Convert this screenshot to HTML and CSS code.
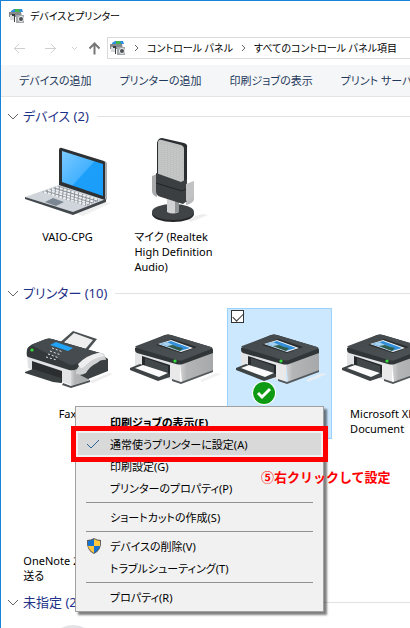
FILE: index.html
```html
<!DOCTYPE html>
<html lang="ja">

<head>
    <meta charset="UTF-8">
    <meta name="viewport" content="width=device-width, initial-scale=1.0">
    <title>デバイスとプリンター</title>
    <link rel="stylesheet" href="styles.css">
</head>

<body>
    <!-- shared drawings -->
    <svg class="defs" width="0" height="0" aria-hidden="true">
        <defs>
            <linearGradient id="screen" x1="0" y1="0" x2="1" y2="1">
                <stop offset="0" stop-color="#7ccaff" />
                <stop offset="0.5" stop-color="#45b2ff" />
                <stop offset="0.52" stop-color="#1c9ffb" />
                <stop offset="1" stop-color="#1a9df8" />
            </linearGradient>
            <linearGradient id="side" x1="0" y1="0" x2="1" y2="0">
                <stop offset="0" stop-color="#d5d5d6" />
                <stop offset="0.2" stop-color="#b4b5b6" />
                <stop offset="1" stop-color="#a6a8aa" />
            </linearGradient>
            <linearGradient id="lid" x1="0" y1="0" x2="1" y2="1">
                <stop offset="0" stop-color="#42474a" />
                <stop offset="1" stop-color="#4d5356" />
            </linearGradient>
        </defs>
        <symbol id="small-devices" viewBox="0 0 16 14">
            <path d="M2 2l3-2h8l1 3H2z" fill="#2b8fdc" />
            <path d="M6 0h4l1 3H6z" fill="#43b54a" />
            <path d="M0 3h12l1 5H0z" fill="#85898b" />
            <path d="M1 6h4v5H1z" fill="#d8dadb" />
            <path d="M3 5h3v8H5V7H3z" fill="#3c4042" />
            <path d="M7 6h8v8H7z" fill="#a5a9ab" />
            <circle cx="12" cy="10" r="3" fill="#e7eaec" />
            <circle cx="12" cy="10" r="2" fill="#4b5154" />
        </symbol>
        <symbol id="printer" viewBox="-4 -2 96 60">
            <path d="M70 50l16-7 5 1-19 8z" fill="#eeeeee" opacity="0.8" />
            <path d="M5 20l45 14v18l-8-2L5 38z" fill="#e3e4e5" />
            <path d="M12 26l28 9v12L12 38z" fill="#25292b" />
            <path d="M15 28l23 8v7L15 36z" fill="#42474a" />
            <path d="M50 33l33-13v20L52 52z" fill="url(#side)" />
            <path d="M40 34l10 1v17l-10-3z" fill="#e9e9ea" />
            <path d="M42 49l9 3 32-12v2L51 54l-9-3z" fill="#54595b" />
            <path d="M0 38l10-4 30 10v3l-12 4L0 40z" fill="#3e4345" />
            <path d="M5 38l8-3 25 8-9 4z" fill="#fbfbfb" />
            <path d="M5 18L35 5q3-1 6 0l40 12q2 1 2 3v3L53 34q-3 1-7 0L7 23q-2-1-2-3z" fill="#303537" />
            <path d="M6 16L35 5q3-1 6 0l40 12q2 1 0 2L53 30q-3 1-6 0L7 18q-3-1-1-2z" fill="url(#lid)" />
            <path d="M26 15l16-6 25 8-16 6z" fill="#292d2f" />
            <path d="M28 14l13-4 22 8-12 4z" fill="#eef3f7" />
            <path d="M30 14l11-3 19 7-10 3z" fill="#338fda" />
            <path d="M31 14l6-2 12 6 2 3z" fill="#a5d1ef" />
            <path d="M37 16l6-1 5 2 5 1-3 3z" fill="#315c48" />
            <circle cx="45" cy="31" r="1.6" fill="#33e438" />
        </symbol>
    </svg>

    <div class="window">
        <header class="titlebar">
            <svg class="app-icon" width="16" height="14"><use href="#small-devices" /></svg>
            <span>デバイスとプリンター</span>
        </header>

        <nav class="navbar">
            <button class="nav-btn" aria-label="戻る" disabled>
                <svg width="13" height="11" viewBox="0 0 13 11"><path d="M1 5.500h11M6 1L1.500 5.500 6 10" /></svg>
            </button>
            <button class="nav-btn" aria-label="進む" disabled>
                <svg width="13" height="11" viewBox="0 0 13 11"><path d="M1 5.500h11M7 1l4.500 4.500L7 10" /></svg>
            </button>
            <button class="nav-btn recent" aria-label="最近表示した場所" disabled>
                <svg width="7" height="5" viewBox="0 0 7 5"><path d="M1 1l2.500 2.500L6 1" /></svg>
            </button>
            <button class="nav-btn up" aria-label="上へ">
                <svg width="13" height="13" viewBox="0 0 13 13"><path d="M6.500 12.500V1.500M1.500 6.500l5-5 5 5" /></svg>
            </button>
            <div class="address">
                <svg class="app-icon" width="16" height="14"><use href="#small-devices" /></svg>
                <svg class="crumb" width="5" height="8" viewBox="0 0 5 8"><path d="M1 1l3 3-3 3" /></svg>
                <a href="#">コントロール パネル</a>
                <svg class="crumb" width="5" height="8" viewBox="0 0 5 8"><path d="M1 1l3 3-3 3" /></svg>
                <a href="#">すべてのコントロール パネル項目</a>
            </div>
        </nav>

        <div class="commands">
            <button>デバイスの追加</button>
            <button>プリンターの追加</button>
            <button>印刷ジョブの表示</button>
            <button>プリント サーバー プロパティ</button>
        </div>

        <main>
            <section class="group">
                <h2>
                    <svg width="12" height="7" viewBox="0 0 12 7"><path d="M1 1l5 5 5-5" /></svg>
                    デバイス (2)
                </h2>
                <div class="tiles">
                    <div class="tile">
                        <div class="thumb">
                            <svg width="96" height="84" viewBox="3 -5 96 84">
                                <path d="M60 70l26-12 8 1-28 13z" fill="#f0f0f0" />
                                <path d="M42 6q0-3 3-2l42 13q2 1 2 3v34q0 3-3 2L42 42z" fill="#2e3133" />
                                <path d="M45 7l41 13v32L45 38z" fill="url(#screen)" />
                                <path d="M88 17l2 2v36l-2 2z" fill="#a9aeb1" />
                                <path d="M8 53l34-12 46 15-32 14z" fill="#cfd5da" />
                                <path d="M8 53l48 15 33-13v3L56 71 8 55z" fill="#42484c" />
                                <path d="M25 48l17-6 41 14-14 6z" fill="#8b9298" />
                                <path d="M27 48l43 13M31 46l43 14M35 45l43 13M39 43l43 13" stroke="#eef1f3" stroke-width="2" stroke-dasharray="3 1" fill="none" />
                                <path d="M28 58l8-4 11 4-8 4z" fill="#7b8793" />
                            </svg>
                        </div>
                        <p>VAIO-CPG</p>
                    </div>
                    <div class="tile">
                        <div class="thumb">
                            <svg width="96" height="92" viewBox="0 -2 96 92">
                                <path d="M60 82l16-5 6 1-17 7z" fill="#eeeeee" />
                                <ellipse cx="47" cy="77" rx="21" ry="8" fill="#25282a" />
                                <ellipse cx="47" cy="75" rx="21" ry="8" fill="#404446" />
                                <path d="M41 62h12v13q-6 3-12 0z" fill="#d0d2d3" />
                                <path d="M49 62h4v13l-4 1z" fill="#929596" />
                                <path d="M26 39l5-2v23q-5-2-5-6z" fill="#a8aaab" />
                                <path d="M60 51l8-3v14q0 4-8 6z" fill="#babcbd" />
                                <path d="M31 6q1-5 5-5l22 5q4 1 3 5v44H31z" fill="#2b2e30" />
                                <path d="M32 6q0-4 4-3l19 5q3 1 3 4v42H32z" fill="#bfc1c1" />
                                <path d="M34 8v34M37 8v36M40 8v38M43 9v38M46 10v38M49 11v38M52 12v38M55 13v37" stroke="#cfd1d1" stroke-dasharray="1 1" />
                                <path d="M30 36l25 9 6-3v22l-4 3-22-7q-5-1-5-6z" fill="#3b3f41" />
                                <path d="M30 46l26 8 6-3" stroke="#222527" fill="none" />
                                <path d="M60 47l8-3v13q0 5-8 7z" fill="#c0c2c3" />
                            </svg>
                        </div>
                        <p>マイク (Realtek<br>High Definition<br>Audio)</p>
                    </div>
                </div>
            </section>

            <section class="group">
                <h2>
                    <svg width="12" height="7" viewBox="0 0 12 7"><path d="M1 1l5 5 5-5" /></svg>
                    プリンター (10)
                </h2>
                <div class="tiles">
                    <div class="tile">
                        <div class="thumb">
                            <svg width="96" height="62" viewBox="-1 -3 96 62">
                                <path d="M66 52l22-9 4 1-20 9z" fill="#eeeeee" />
                                <path d="M36 15L52 1l24 8-13 16z" fill="#4b5052" />
                                <path d="M39 16L53 3l19 7-12 14z" fill="#eeeeef" />
                                <path d="M6 24l46 14v18L7 38z" fill="#e2e3e4" />
                                <path d="M11 31l30 10v12L11 43z" fill="#2a2e30" />
                                <path d="M50 38l18-7v19l-18 6z" fill="url(#side)" />
                                <path d="M4 42l8-3 28 9v5l-8-1-28-9z" fill="#3a3f41" />
                                <path d="M42 53l8 3 19-6v2l-19 6-9-3z" fill="#4d5254" />
                                <path d="M6 20q0-3 6-6l13-5q3-1 6 0l48 14q4 2 2 6L56 39q-4 2-8 1L7 27q-2-1-1-7z" fill="#34393b" />
                                <path d="M10 15l15-6q3-1 6 0l48 14-24 11q-4 2-8 0z" fill="#454b4e" />
                                <path d="M29 15l6-3 17 6-5 3z" fill="#21a4f7" />
                                <path d="M31 18l11 4M29 21l11 4M27 24l11 4M25 27l11 3" stroke="#e2e5e7" stroke-dasharray="2 2" />
                                <circle cx="11" cy="20" r="1.6" fill="#38e03c" />
                                <path d="M66 35l18-8 3 2v12l-20 8-8-4z" fill="#3b4042" />
                                <path d="M55 43q0-4 4-8 8-9 18-12 6-1 7 3l1 4q-5-1-9 3-7 3-11 10-5 3-8 1-3 1-2-1z" fill="#d0d2d3" />
                                <path d="M57 34q9-9 20-11 5 0 6 3-12 2-20 11-4 3-6-3z" fill="#eeeeee" />
                            </svg>
                        </div>
                        <p>Fax</p>
                    </div>
                    <div class="tile">
                        <div class="thumb"><svg width="96" height="60"><use href="#printer" /></svg></div>
                    </div>
                    <div class="tile selected">
                        <input type="checkbox" aria-label="プリンターを選択" checked>
                        <div class="thumb"><svg width="96" height="60"><use href="#printer" /></svg></div>
                        <svg class="badge" width="24" height="24" viewBox="0 0 24 24">
                            <circle cx="12" cy="12" r="12" fill="#ffffff" />
                            <circle cx="12" cy="12" r="11" fill="#0f9a13" />
                            <path d="M6 12l4 4 8-8" fill="none" stroke="#ffffff" stroke-width="3" />
                        </svg>
                    </div>
                    <div class="tile">
                        <div class="thumb"><svg width="96" height="60"><use href="#printer" /></svg></div>
                        <p>Microsoft XPS<br>Document</p>
                    </div>
                    <div class="tile">
                        <div class="thumb"></div>
                        <p>OneNote 2016 に<br>送る</p>
                    </div>
                </div>
            </section>

            <section class="group">
                <h2>
                    <svg width="12" height="7" viewBox="0 0 12 7"><path d="M1 1l5 5 5-5" /></svg>
                    未指定 (2)
                </h2>
                <div class="tiles">
                    <div class="tile">
                        <div class="thumb">
                            <svg width="96" height="90" viewBox="0 0 96 90">
                                <path d="M36 9q17-12 34 0v60H36z" fill="#e3e3e7" />
                            </svg>
                        </div>
                    </div>
                </div>
            </section>
        </main>
    </div>

    <div class="menu" role="menu">
        <button class="default" role="menuitem"><span>印刷ジョブの表示(E)</span></button>
        <button class="active" role="menuitem">
            <svg width="14" height="10" viewBox="0 0 14 10"><path d="M1 5l4 4 8-8" fill="none" stroke="#29639c" /></svg>
            <span>通常使うプリンターに設定(A)</span>
        </button>
        <button role="menuitem"><span>印刷設定(G)</span></button>
        <button role="menuitem"><span>プリンターのプロパティ(P)</span></button>
        <hr>
        <button role="menuitem"><span>ショートカットの作成(S)</span></button>
        <hr>
        <button role="menuitem">
            <svg width="16" height="16" viewBox="0 0 16 16">
                <path d="M8 0q3 2 7 2 1 10-7 14Q0 12 1 2q4 0 7-2z" fill="#5c5c5c" />
                <path d="M8 1v7H2V3q3 0 6-2z" fill="#1673d1" />
                <path d="M8 1q3 2 6 2v5H8z" fill="#ffc83d" />
                <path d="M2 8h6v7Q3 12 2 8z" fill="#ffc83d" />
                <path d="M8 8h6q-1 4-6 7z" fill="#1673d1" />
            </svg>
            <span>デバイスの削除(V)</span>
        </button>
        <button role="menuitem"><span>トラブルシューティング(T)</span></button>
        <hr>
        <button role="menuitem"><span>プロパティ(R)</span></button>
    </div>

    <div class="marker"></div>
    <strong class="note">⑤右クリックして設定</strong>
</body>

</html>
```

FILE: styles.css
```css
* {
    box-sizing: border-box;
}

body {
    margin: 0;
    background: #ffffff;
    color: #000000;
    font-family: "Noto Sans", "Noto Sans CJK JP", sans-serif;
    font-size: 11px;
    line-height: 15px;
    font-feature-settings: "palt";
}

button {
    border: 0;
    padding: 0;
    background: none;
    color: inherit;
    font: inherit;
    font-feature-settings: inherit;
    white-space: nowrap;
}

a {
    color: inherit;
    text-decoration: none;
}

svg {
    flex: none;
}

.defs {
    position: absolute;
}

.window {
    height: 100vh;
    overflow: hidden;
    border-top: 1px solid #1883d7;
    border-left: 1px solid #1883d7;
}

/* title and address */
.titlebar {
    display: flex;
    align-items: center;
    gap: 5px;
    height: 30px;
    padding-left: 8px;
    font-size: 10px;
}

.navbar {
    display: flex;
    align-items: center;
    height: 34px;
    padding-left: 12px;
    font-size: 10px;
    white-space: nowrap;
}

.nav-btn {
    display: flex;
    margin-right: 18px;
}

.nav-btn svg,
.crumb,
h2 svg {
    fill: none;
    stroke: #d0d0d0;
}

.nav-btn.recent {
    margin: 0 10px 0 -4px;
}

.nav-btn.up {
    margin-right: 6px;
}

.nav-btn.up svg {
    stroke: #777777;
    stroke-width: 2;
}

.address {
    display: flex;
    flex: 1;
    align-items: center;
    gap: 8px;
    height: 22px;
    padding-left: 2px;
    border: 1px solid #d9d9d9;
    border-right: 0;
    overflow: hidden;
}

.crumb {
    stroke: #666666;
}

.commands {
    display: flex;
    align-items: center;
    gap: 28px;
    height: 32px;
    padding-left: 18px;
    overflow: hidden;
    background: #f5f6f7;
    border-bottom: 1px solid #e5e5e5;
    color: #1e395b;
}

/* device groups */
main {
    padding-top: 3px;
}

.group {
    margin-top: 1px;
    padding-left: 6px;
}

h2 {
    display: flex;
    align-items: center;
    gap: 4px;
    height: 30px;
    margin: 0;
    color: #1e3287;
    font-size: 13px;
    font-weight: normal;
}

h2::after {
    content: "";
    flex: 1;
    height: 1px;
    margin-left: 4px;
    background: #e2e2e2;
}

h2 svg {
    stroke: #666666;
}

.tiles {
    display: grid;
    grid-template-columns: repeat(4, 105px);
    gap: 16px 1px;
    padding-left: 8px;
}

.group .tiles {
    padding-bottom: 15px;
}

.group + .group {
    margin-top: -14px;
}

.tile {
    display: flex;
    flex-direction: column;
    align-items: center;
    position: relative;
    min-height: 131px;
    padding-bottom: 2px;
    border: 1px solid transparent;
}

.tile.selected {
    background: #cce8ff;
    border-color: #99d1ff;
}

.tile p {
    margin: 0;
    white-space: nowrap;
}

.thumb {
    display: flex;
    align-items: center;
    height: 97px;
}

.tile input {
    appearance: none;
    position: absolute;
    top: 1px;
    left: 3px;
    width: 13px;
    height: 13px;
    margin: 0;
    background: #ffffff;
    border: 1px solid #333333;
}

.tile input:checked::before {
    content: "";
    position: absolute;
    top: 2px;
    left: 1px;
    width: 9px;
    height: 5px;
    border: solid #333333;
    border-width: 0 0 1px 1px;
    transform: rotate(-45deg);
}

.badge {
    position: absolute;
    top: 72px;
    left: 24px;
}

/* context menu */
.menu {
    position: absolute;
    top: 406px;
    left: 75px;
    width: 249px;
    padding: 4px 2px 3px;
    background: #f1f1f1;
    border: 1px solid #a0a0a0;
    box-shadow: 3px 3px 2px rgba(0, 0, 0, 0.5);
}

.menu button {
    display: grid;
    grid-template-columns: 24px 1fr;
    align-items: center;
    width: 100%;
    height: 22px;
    padding-left: 8px;
    text-align: left;
}

.menu span {
    grid-column: 2;
}

.menu svg {
    grid-row: 1;
}

.menu .default {
    font-weight: bold;
}

.menu .active {
    background: #d9d9d9;
}

.menu hr {
    height: 1px;
    margin: 3px 8px;
    border: 0;
    background: #919191;
}

/* highlight and note over the menu */
.marker {
    position: absolute;
    top: 426px;
    left: 71px;
    width: 257px;
    height: 36px;
    border: 5px solid #ff0000;
}

.note {
    position: absolute;
    top: 469px;
    left: 261px;
    color: #ff0000;
    font-family: "Noto Sans CJK JP", sans-serif;
    font-size: 13px;
    font-feature-settings: normal;
    white-space: nowrap;
}
```
